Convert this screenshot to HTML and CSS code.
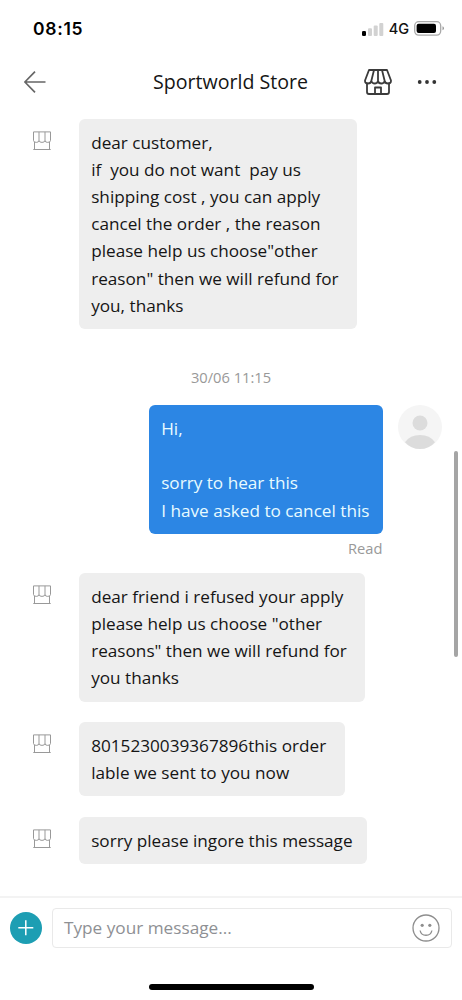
FILE: index.html
```html
<!DOCTYPE html>
<html lang="en">
<head>
<meta charset="utf-8">
<meta name="viewport" content="width=device-width, initial-scale=1">
<title>Sportworld Store</title>
<link rel="stylesheet" href="styles.css">
</head>
<body>
<svg class="defs" aria-hidden="true">
  <symbol id="shop" viewBox="0 0 20 20">
    <path d="M1.500.9h17v8.600q-.2 1.900-2.800 1.900T13 9.500q-.2 1.900-3 1.900T7 9.500q-.2 1.900-2.700 1.900T1.500 9.500zM7 .9v8.600M13 .9v8.600M2.500 11v7.500M17.500 11v7.500M1.300 18.500h17.400" fill="none" stroke="#999" stroke-width="1"/>
  </symbol>
</svg>
<div class="phone">
  <div class="status">
    <span class="time">08:15</span>
    <div class="status-right">
      <svg width="22" height="14" viewBox="0 0 22 14"><rect x="0" y="9" width="4" height="5" rx="1.3" fill="#000"/><g fill="#d2d2d2"><rect x="6" y="6.3" width="4" height="7.7" rx="1"/><rect x="11.7" y="3.5" width="4" height="10.5" rx="1"/><rect x="17.3" y="1" width="4" height="13" rx="1"/></g></svg>
      <span class="net">4G</span>
      <svg class="battery" width="31" height="15" viewBox="0 0 31 15"><rect x=".7" y=".7" width="26" height="13.4" rx="4" fill="#fff" stroke="#a9a9a9" stroke-width="1.3"/><rect x="2.6" y="2.7" width="19.4" height="9.3" rx="2" fill="#000"/><path d="M28.5 5.2v4q1.5-.6 1.5-2t-1.5-2z" fill="#999"/></svg>
    </div>
  </div>
  <header class="header">
    <svg class="back" width="22" height="22" viewBox="0 0 22 22"><path d="M11 .7.9 11 11 21.3M1 11h20.5" fill="none" stroke="#666" stroke-width="1.7"/></svg>
    <h1 class="title">Sportworld Store</h1>
    <svg class="store" width="30" height="28" viewBox="0 0 30 28"><g fill="none" stroke="#3b3b3b" stroke-width="1.8" stroke-linejoin="round" stroke-linecap="round"><path d="M6 2h18l4 10.500q.2 3-3 3-2.800 0-3.300-2.500-.7 2.500-3.400 2.500T15 13q-.7 2.500-3.300 2.500T8.300 13q-.5 2.500-3.300 2.500-3.200 0-3-3zM11 2 8.300 13M15 2v11M19 2l2.700 11"/><path d="M4 15.500v8.500q0 2 2 2h18q2 0 2-2v-8.500M12 26v-6.500h6V26"/></g></svg>
    <svg class="more" width="20" height="6" viewBox="0 0 20 6" fill="#333"><circle cx="2.700" cy="3" r="1.900"/><circle cx="10" cy="3" r="1.900"/><circle cx="17.300" cy="3" r="1.900"/></svg>
  </header>
  <main class="chat">
    <div class="row row-first">
      <svg class="shop"><use href="#shop"/></svg>
      <p class="bubble w1">dear customer,
if  you do not want  pay us
shipping cost , you can apply
cancel the order , the reason
please help us choose"other
reason" then we will refund for
you, thanks</p>
    </div>
    <div class="date">30/06 11:15</div>
    <div class="row mine">
      <p class="bubble blue">Hi,

sorry to hear this
I have asked to cancel this</p>
      <svg class="avatar" viewBox="0 0 44 44"><circle cx="22" cy="22" r="22" fill="#f5f5f5"/><circle cx="22" cy="18" r="7.500" fill="#dcdcdc"/><path d="M7 37.200Q12 30 22 30t15 7.200Q31 44 22 44T7 37.200z" fill="#dcdcdc"/></svg>
    </div>
    <div class="read">Read</div>
    <div class="row">
      <svg class="shop"><use href="#shop"/></svg>
      <p class="bubble w2">dear friend i refused your apply
please help us choose "other
reasons" then we will refund for
you thanks</p>
    </div>
    <div class="row row-order">
      <svg class="shop"><use href="#shop"/></svg>
      <p class="bubble w3">8015230039367896this order
lable we sent to you now</p>
    </div>
    <div class="row">
      <svg class="shop"><use href="#shop"/></svg>
      <p class="bubble w4">sorry please ingore this message</p>
    </div>
    <div class="scrollbar"></div>
  </main>
  <footer class="composer">
    <svg class="plus" width="32" height="32" viewBox="0 0 32 32"><circle cx="16" cy="16" r="16" fill="#1d9eb3"/><path d="M8.300 15.700h15M15.800 8.200v15" stroke="#fff" stroke-width="1.500"/></svg>
    <div class="input">
      <span>Type your message...</span>
      <svg width="28" height="28" viewBox="0 0 28 28"><g fill="none" stroke="#8e8e8e" stroke-width="1.300"><circle cx="14" cy="14" r="13"/><path d="M8.100 16.500c1.200 6.300 10.600 6.300 11.800 0"/></g><circle cx="10.200" cy="11.300" r="1.600" fill="#8e8e8e"/><circle cx="17.800" cy="11.300" r="1.600" fill="#8e8e8e"/></svg>
    </div>
  </footer>
  <div class="home"><div class="home-bar"></div></div>
</div>
</body>
</html>
```
FILE: styles.css
```css
* { box-sizing: border-box; }
body { margin: 0; background: #fff; font-family: "Open Sans", "Noto Sans", sans-serif; color: #151515; }
.defs { position: absolute; width: 0; height: 0; }
.phone { width: 462px; height: 1000px; display: flex; flex-direction: column; overflow: hidden; background: #fff; }
.status { height: 57px; display: flex; justify-content: space-between; align-items: center; padding: 0 17px 0 33px; flex: none; }
.time { font: 600 17.500px/20px Inter, sans-serif; letter-spacing: .7px; color: #000; }
.status-right { display: flex; align-items: center; }
.net { font: 500 14.500px/18px Inter, sans-serif; color: #111; margin-left: 5px; }
.battery { margin-left: 5px; }
.header { height: 50px; display: grid; grid-template-columns: 129px 210px 54px 1fr; align-items: center; padding-left: 24px; flex: none; }
.title { margin: 0; font-size: 19.600px; font-weight: 400; line-height: 28px; white-space: nowrap; }
.more { display: block; }
.chat { height: 789px; position: relative; padding-top: 11.500px; flex: none; }
.row { display: flex; align-items: flex-start; padding-left: 32px; margin-bottom: 20px; }
.row-first { margin-bottom: 0; }
.row-order { margin-bottom: 21px; }
.shop { width: 20px; height: 20px; margin: 12px 27px 0 0; flex: none; }
.bubble { margin: 0; padding: 10px 12.200px; background: #eee; border-radius: 6px; font-size: 17.170px; line-height: 27.200px; white-space: pre; }
.w1 { width: 278px; }
.w2 { width: 286px; }
.w3 { width: 266px; }
.w4 { width: 288px; }
.date { text-align: center; color: #999; font-size: 14.700px; line-height: 20px; margin: 38px 0 18px; }
.mine { padding-left: 149px; margin-bottom: 4px; }
.blue { width: 234px; background: #2c86e4; color: #e8fbff; }
.avatar { width: 44px; height: 44px; margin-left: 15px; flex: none; }
.read { text-align: right; padding-right: 79.500px; color: #999; font-size: 14.700px; line-height: 20px; margin-bottom: 15px; }
.scrollbar { position: absolute; left: 454px; top: 344px; width: 4px; height: 206px; border-radius: 2px; background: #a5a5a5; }
.composer { height: 62px; border-top: 2px solid #f3f3f3; display: flex; align-items: center; padding: 0 10px 1px; gap: 10px; flex: none; }
.input { flex: 1; height: 40px; border: 1px solid #e9e9e9; border-radius: 4px; display: flex; align-items: center; justify-content: space-between; padding: 0 11px; font-size: 17.200px; color: #8e9094; }
.home { flex: 1; display: flex; justify-content: center; align-items: flex-end; padding-bottom: 10px; }
.home-bar { width: 165px; height: 6px; border-radius: 3px; background: #000; }
```
